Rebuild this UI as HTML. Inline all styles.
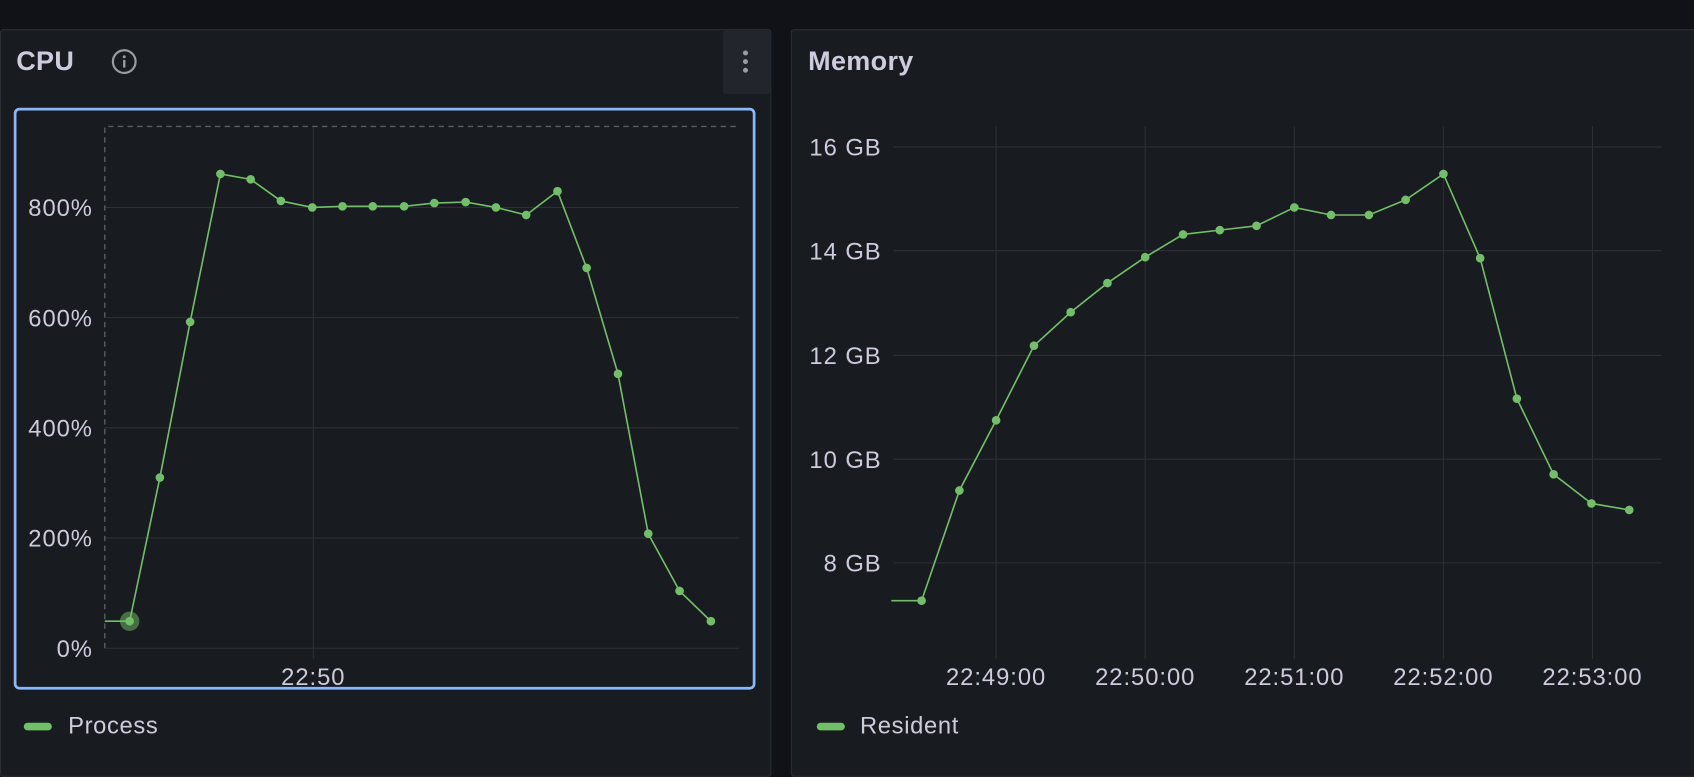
<!DOCTYPE html>
<html><head><meta charset="utf-8"><style>
html,body{margin:0;padding:0;background:#111217;width:1694px;height:764px;overflow:hidden}
#s{position:absolute;left:0;top:0;width:1568px;height:707px;transform:scale(1.0804);transform-origin:0 0;font-family:"Liberation Sans",sans-serif;color:#ccccdc}
.p{position:absolute;background:#181b1f;border:1px solid #2a2d34;border-radius:3px}
.t{position:absolute;font-size:25px;font-weight:bold;color:#ccccdc;letter-spacing:0.3px}
.lg{position:absolute;font-size:22px;color:#ccccdc;letter-spacing:0.6px}
.pill{position:absolute;width:26px;height:7px;border-radius:4px;background:#73bf69}
</style></head><body><div id="s">
<div class="p" style="left:0;top:27px;width:712px;height:690px"></div>
<div class="p" style="left:732px;top:27px;width:846px;height:690px"></div>
<div class="t" style="left:15px;top:43px">CPU</div>
<svg style="position:absolute;left:102px;top:44px" width="26" height="26" viewBox="0 0 26 26"><circle cx="13" cy="13" r="10.5" fill="none" stroke="#9a9ca4" stroke-width="2"/><circle cx="13" cy="8.5" r="1.4" fill="#9a9ca4"/><rect x="11.9" y="11.5" width="2.2" height="7" fill="#9a9ca4"/></svg>
<div style="position:absolute;left:669px;top:28px;width:44px;height:59px;background:#22252b;border-radius:3px"></div>
<svg style="position:absolute;left:684px;top:44px" width="12" height="26"><circle cx="6" cy="5" r="2.3" fill="#9a9ca4"/><circle cx="6" cy="13" r="2.3" fill="#9a9ca4"/><circle cx="6" cy="21" r="2.3" fill="#9a9ca4"/></svg>
<div class="t" style="left:748px;top:43px">Memory</div>
<svg style="position:absolute;left:0;top:0" width="1568" height="707" font-family="Liberation Sans, sans-serif" font-size="22" letter-spacing="0.9" fill="#ccccdc">
<rect x="14" y="101" width="684" height="536" rx="4" fill="none" stroke="#8ab8ff" stroke-width="2.5"/>
<g stroke="#2c3036" stroke-width="1">
<line x1="97" y1="192" x2="684" y2="192"/><line x1="97" y1="294" x2="684" y2="294"/><line x1="97" y1="396" x2="684" y2="396"/><line x1="97" y1="498" x2="684" y2="498"/><line x1="97" y1="600" x2="684" y2="600"/><line x1="290" y1="117" x2="290" y2="610"/>
<line x1="827" y1="136" x2="1538" y2="136"/><line x1="827" y1="232" x2="1538" y2="232"/><line x1="827" y1="329" x2="1538" y2="329"/><line x1="827" y1="425" x2="1538" y2="425"/><line x1="827" y1="521" x2="1538" y2="521"/>
<line x1="922" y1="117" x2="922" y2="610"/><line x1="1060" y1="117" x2="1060" y2="610"/><line x1="1198" y1="117" x2="1198" y2="610"/><line x1="1336" y1="117" x2="1336" y2="610"/><line x1="1474" y1="117" x2="1474" y2="610"/>
</g>
<path d="M97 600V117H684" fill="none" stroke="#5a5d64" stroke-width="1.3" stroke-dasharray="5,4"/>
<g text-anchor="end"><text x="86" y="200">800%</text><text x="86" y="302">600%</text><text x="86" y="404">400%</text><text x="86" y="506">200%</text><text x="86" y="608">0%</text>
<text x="816" y="144">16 GB</text><text x="816" y="240">14 GB</text><text x="816" y="337">12 GB</text><text x="816" y="433">10 GB</text><text x="816" y="529">8 GB</text></g>
<g text-anchor="middle"><text x="290" y="634">22:50</text><text x="922" y="634">22:49:00</text><text x="1060" y="634">22:50:00</text><text x="1198" y="634">22:51:00</text><text x="1336" y="634">22:52:00</text><text x="1474" y="634">22:53:00</text></g>
<circle cx="120" cy="575" r="9" fill="#73bf69" opacity="0.5"/>
<polyline fill="none" stroke="#73bf69" stroke-width="1.5" points="97,575 120,575 148,442 176,298 204,161 232,166 260,186 289,192 317,191 345,191 374,191 402,188 431,187 459,192 487,199 516,177 543,248 572,346 600,494 629,547 658,575"/>
<g fill="#73bf69"><circle cx="120" cy="575" r="4"/><circle cx="148" cy="442" r="4"/><circle cx="176" cy="298" r="4"/><circle cx="204" cy="161" r="4"/><circle cx="232" cy="166" r="4"/><circle cx="260" cy="186" r="4"/><circle cx="289" cy="192" r="4"/><circle cx="317" cy="191" r="4"/><circle cx="345" cy="191" r="4"/><circle cx="374" cy="191" r="4"/><circle cx="402" cy="188" r="4"/><circle cx="431" cy="187" r="4"/><circle cx="459" cy="192" r="4"/><circle cx="487" cy="199" r="4"/><circle cx="516" cy="177" r="4"/><circle cx="543" cy="248" r="4"/><circle cx="572" cy="346" r="4"/><circle cx="600" cy="494" r="4"/><circle cx="629" cy="547" r="4"/><circle cx="658" cy="575" r="4"/></g>
<polyline fill="none" stroke="#73bf69" stroke-width="1.5" points="825,556 853,556 888,454 922,389 957,320 991,289 1025,262 1060,238 1095,217 1129,213 1163,209 1198,192 1232,199 1267,199 1301,185 1336,161 1370,239 1404,369 1438,439 1473,466 1508,472"/>
<g fill="#73bf69"><circle cx="853" cy="556" r="4"/><circle cx="888" cy="454" r="4"/><circle cx="922" cy="389" r="4"/><circle cx="957" cy="320" r="4"/><circle cx="991" cy="289" r="4"/><circle cx="1025" cy="262" r="4"/><circle cx="1060" cy="238" r="4"/><circle cx="1095" cy="217" r="4"/><circle cx="1129" cy="213" r="4"/><circle cx="1163" cy="209" r="4"/><circle cx="1198" cy="192" r="4"/><circle cx="1232" cy="199" r="4"/><circle cx="1267" cy="199" r="4"/><circle cx="1301" cy="185" r="4"/><circle cx="1336" cy="161" r="4"/><circle cx="1370" cy="239" r="4"/><circle cx="1404" cy="369" r="4"/><circle cx="1438" cy="439" r="4"/><circle cx="1473" cy="466" r="4"/><circle cx="1508" cy="472" r="4"/></g>
</svg>
<div class="pill" style="left:22px;top:669px"></div><div class="lg" style="left:63px;top:659px">Process</div>
<div class="pill" style="left:756px;top:669px"></div><div class="lg" style="left:796px;top:659px">Resident</div>
</div></body></html>
